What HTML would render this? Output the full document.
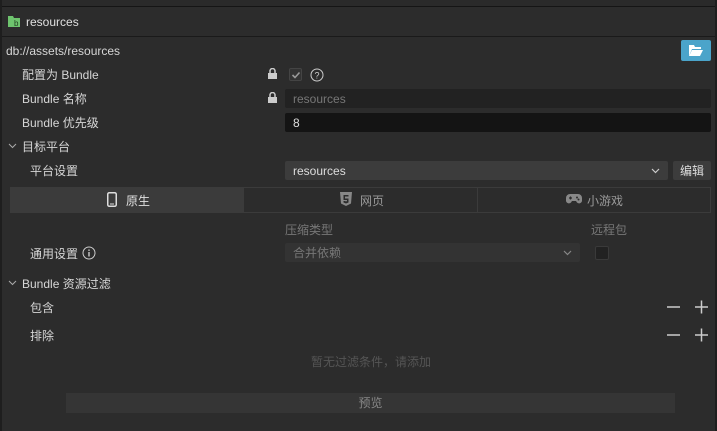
<!DOCTYPE html>
<html><head><meta charset="utf-8"><style>
*{margin:0;padding:0;box-sizing:border-box}
body{width:717px;height:431px;background:#2c2c2c;font-family:"Liberation Sans","Noto Sans CJK SC",sans-serif;font-size:12px;color:#d6d6d6;position:relative;overflow:hidden}
.a{position:absolute}
.t{position:absolute;line-height:16px;white-space:nowrap;margin-top:1px}
.in{position:absolute;border-radius:2px;padding-left:8px;line-height:20px}
</style></head><body>
<div class="a" style="left:0;top:0;width:717px;height:7px;background:#2a2a2a;border-bottom:1px solid #151515"></div>
<div class="a" style="left:0;top:0;width:2px;height:431px;background:#1e1e1e"></div>
<div class="a" style="left:715px;top:0;width:2px;height:431px;background:#1e1e1e"></div>
<div class="a" style="left:2px;top:36px;width:713px;height:1px;background:#1a1a1a"></div>
<svg class="a" style="left:8px;top:15px" width="12" height="12"><path d="M0 1h5l1 2h6v9H0z" fill="#6ec46e"/><text x="6" y="11" font-size="8" fill="#1f3d1f" font-family="Liberation Sans">b</text></svg>
<div class="t" style="left:26px;top:13px;color:#e0e0e0">resources</div>
<div class="t" style="left:6px;top:42px">db://assets/resources</div>
<div class="a" style="left:681px;top:40px;width:30px;height:21px;background:#4ba4ca;border-radius:2px"></div>
<svg class="a" style="left:689px;top:45px" width="14" height="11"><path d="M0 0h5l1 2h6v2H3L0 11z" fill="#fff"/><path d="M3 5h11l-3 6H0z" fill="#fff"/></svg>
<div class="t" style="left:22px;top:66px">配置为 Bundle</div>
<svg class="a" style="left:268px;top:68px" width="9" height="11"><path d="M2 5V3a2.5 2.5 0 0 1 5 0v2" stroke="#ccc" stroke-width="1.5" fill="none"/><rect x="0" y="5" width="9" height="6" fill="#ccc"/></svg>
<div class="a" style="left:289px;top:68px;width:13px;height:13px;background:#333;border:1px solid #444;border-radius:2px"></div>
<svg class="a" style="left:290px;top:69px" width="12" height="12"><path d="M2.5 6l2.5 2.5 4.5-5" stroke="#999" stroke-width="1.6" fill="none"/></svg>
<svg class="a" style="left:310px;top:68px" width="14" height="14"><circle cx="7" cy="7" r="6" stroke="#ccc" fill="none"/><text x="7" y="10.5" font-size="9" text-anchor="middle" fill="#ccc" font-family="Liberation Sans">?</text></svg>
<div class="t" style="left:22px;top:90px">Bundle 名称</div>
<svg class="a" style="left:268px;top:92px" width="9" height="11"><path d="M2 5V3a2.5 2.5 0 0 1 5 0v2" stroke="#ccc" stroke-width="1.5" fill="none"/><rect x="0" y="5" width="9" height="6" fill="#ccc"/></svg>
<div class="in" style="left:285px;top:89px;width:426px;height:19px;background:#222;color:#777">resources</div>
<div class="t" style="left:22px;top:114px">Bundle 优先级</div>
<div class="in" style="left:285px;top:113px;width:426px;height:19px;background:#141414;color:#ddd">8</div>
<svg class="a" style="left:8px;top:143px" width="9" height="6"><path d="M1 1l3.5 3.5L8 1" stroke="#aaa" fill="none"/></svg>
<div class="t" style="left:22px;top:138px">目标平台</div>
<div class="t" style="left:30px;top:162px">平台设置</div>
<div class="in" style="left:285px;top:161px;width:383px;height:19px;background:#3c3c3c;color:#ddd">resources</div>
<svg class="a" style="left:651px;top:168px" width="9" height="6"><path d="M1 1l3.5 3.5L8 1" stroke="#ccc" fill="none" stroke-width="1.2"/></svg>
<div class="a" style="left:673px;top:161px;width:38px;height:19px;background:#3c3c3c;border-radius:2px;text-align:center;line-height:20px;color:#ddd">编辑</div>
<div class="a" style="left:10px;top:187px;width:701px;height:26px;border:1px solid #3b3b3b"></div>
<div class="a" style="left:10px;top:187px;width:234px;height:26px;background:#3b3b3b"></div>
<div class="a" style="left:477px;top:187px;width:1px;height:26px;background:#3b3b3b"></div>
<svg class="a" style="left:107px;top:192px" width="10" height="15"><rect x="0.75" y="0.75" width="8.5" height="13.5" rx="1.5" stroke="#ddd" stroke-width="1.5" fill="none"/><rect x="3" y="11.5" width="4" height="1" fill="#ddd"/></svg>
<div class="t" style="left:126px;top:192px;color:#e0e0e0">原生</div>
<svg class="a" style="left:340px;top:192px" width="12" height="14"><path d="M0 0h12l-1 11.5L6 14 1 11.5z" fill="#888"/><path d="M3.5 3h5v1.5h-3.5v2h3.5v4L6 11.5 3.5 10.5V9h1.5l1 .5 1-.5V8H3.5z" fill="#2c2c2c"/></svg>
<div class="t" style="left:360px;top:192px;color:#999">网页</div>
<svg class="a" style="left:566px;top:194px" width="16" height="11"><path d="M4 0h8a4 4 0 0 1 4 4v3a3 3 0 0 1-5 1.5L10 7H6L5 8.5A3 3 0 0 1 0 7V4a4 4 0 0 1 4-4z" fill="#888"/><path d="M3 4h3M4.5 2.5v3" stroke="#2c2c2c" stroke-width="1.2"/><circle cx="11" cy="3.5" r="1" fill="#2c2c2c"/><circle cx="12.5" cy="5.5" r="1" fill="#2c2c2c"/></svg>
<div class="t" style="left:587px;top:192px;color:#999">小游戏</div>
<div class="t" style="left:285px;top:221px;color:#777">压缩类型</div>
<div class="t" style="left:591px;top:221px;color:#777">远程包</div>
<div class="t" style="left:30px;top:245px">通用设置</div>
<svg class="a" style="left:82px;top:246px" width="14" height="14"><circle cx="7" cy="7" r="6" stroke="#ccc" fill="none"/><rect x="6.3" y="6" width="1.4" height="4.5" fill="#ccc"/><rect x="6.3" y="3.5" width="1.4" height="1.4" fill="#ccc"/></svg>
<div class="in" style="left:285px;top:243px;width:295px;height:19px;background:#333;color:#777">合并依赖</div>
<svg class="a" style="left:563px;top:250px" width="9" height="6"><path d="M1 1l3.5 3.5L8 1" stroke="#888" fill="none" stroke-width="1.2"/></svg>
<div class="a" style="left:595px;top:246px;width:14px;height:14px;background:#222;border:1px solid #3a3a3a;border-radius:2px"></div>
<svg class="a" style="left:8px;top:280px" width="9" height="6"><path d="M1 1l3.5 3.5L8 1" stroke="#aaa" fill="none"/></svg>
<div class="t" style="left:22px;top:275px">Bundle 资源过滤</div>
<div class="t" style="left:30px;top:299px">包含</div>
<div class="t" style="left:30px;top:327px">排除</div>
<svg class="a" style="left:666px;top:300px" width="42" height="14"><path d="M1 7h13M29 7h13M35.5 0.5v13" stroke="#ccc" stroke-width="1.5"/></svg>
<svg class="a" style="left:666px;top:328px" width="42" height="14"><path d="M1 7h13M29 7h13M35.5 0.5v13" stroke="#ccc" stroke-width="1.5"/></svg>
<div class="t" style="left:311px;top:353px;color:#555">暂无过滤条件，请添加</div>
<div class="a" style="left:66px;top:393px;width:609px;height:20px;background:#353535;text-align:center;line-height:21px;color:#888">预览</div>
</body></html>
